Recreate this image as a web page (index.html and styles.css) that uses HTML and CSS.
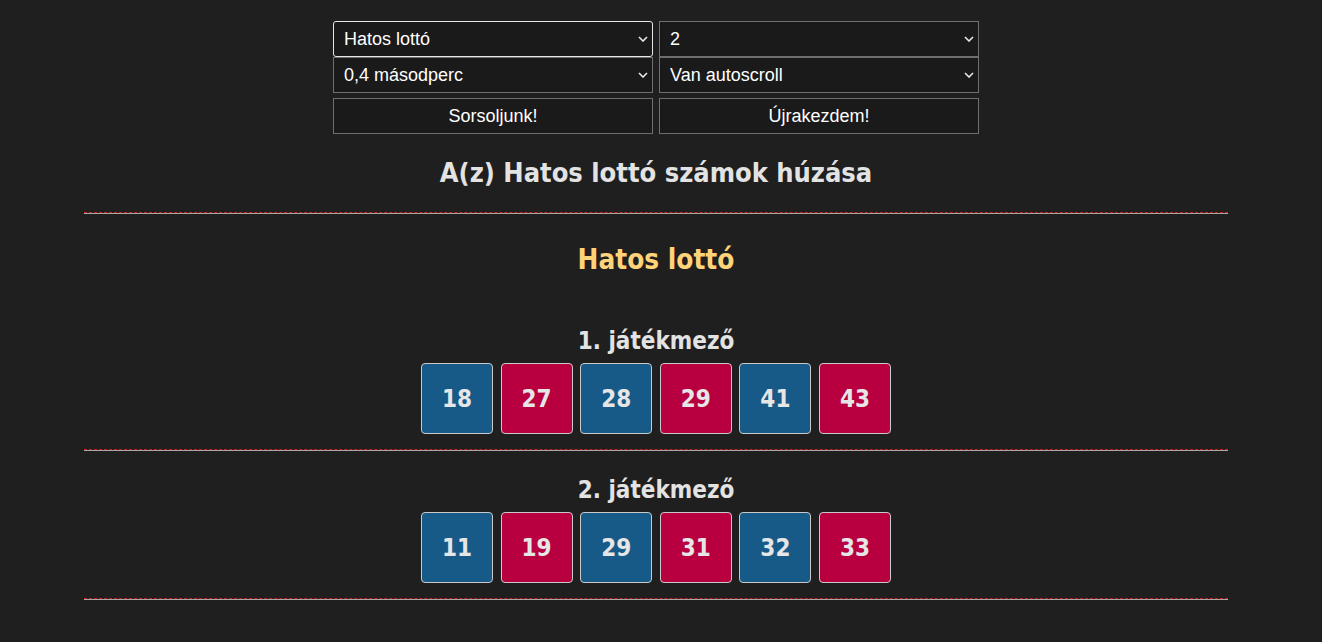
FILE: index.html
```html
<!DOCTYPE html>
<html lang="hu">
<head>
<meta charset="utf-8">
<title>Hatos lottó</title>
<link rel="stylesheet" href="styles.css">
</head>
<body>
<div class="page">
  <div class="controls">
    <div class="col">
      <div class="sel focused"><select><option>Hatos lottó</option></select><svg class="chev" viewBox="0 0 10 6" width="10" height="6"><path d="M1 1l4 4 4-4" fill="none" stroke="#e8e8e8" stroke-width="1.6"/></svg></div>
      <div class="sel"><select><option>0,4 másodperc</option></select><svg class="chev" viewBox="0 0 10 6" width="10" height="6"><path d="M1 1l4 4 4-4" fill="none" stroke="#e8e8e8" stroke-width="1.6"/></svg></div>
      <button class="btn">Sorsoljunk!</button>
    </div>
    <div class="col">
      <div class="sel"><select><option>2</option></select><svg class="chev" viewBox="0 0 10 6" width="10" height="6"><path d="M1 1l4 4 4-4" fill="none" stroke="#e8e8e8" stroke-width="1.6"/></svg></div>
      <div class="sel"><select><option>Van autoscroll</option></select><svg class="chev" viewBox="0 0 10 6" width="10" height="6"><path d="M1 1l4 4 4-4" fill="none" stroke="#e8e8e8" stroke-width="1.6"/></svg></div>
      <button class="btn">Újrakezdem!</button>
    </div>
  </div>
  <h1 class="title">A(z) Hatos lottó számok húzása</h1>
  <div class="rule"></div>
  <h2 class="game">Hatos lottó</h2>
  <section class="field">
    <h3 class="field-title">1. játékmező</h3>
    <div class="balls">
      <div class="ball blue">18</div>
      <div class="ball red">27</div>
      <div class="ball blue">28</div>
      <div class="ball red">29</div>
      <div class="ball blue">41</div>
      <div class="ball red">43</div>
    </div>
  </section>
  <div class="rule"></div>
  <section class="field">
    <h3 class="field-title">2. játékmező</h3>
    <div class="balls">
      <div class="ball blue">11</div>
      <div class="ball red">19</div>
      <div class="ball blue">29</div>
      <div class="ball red">31</div>
      <div class="ball blue">32</div>
      <div class="ball red">33</div>
    </div>
  </section>
  <div class="rule"></div>
</div>
</body>
</html>
```
FILE: styles.css
```css
html, body {
  margin: 0;
  padding: 0;
  background: #1f1f1f;
}
body {
  font-family: "DejaVu Sans Condensed", "DejaVu Sans", sans-serif;
  color: #e3e3e3;
}
.page {
  width: 1312px;
  padding-top: 21px;
  display: flex;
  flex-direction: column;
  align-items: center;
}
.controls {
  display: flex;
  gap: 6px;
}
.col {
  width: 320px;
  display: flex;
  flex-direction: column;
}
.sel {
  position: relative;
  height: 36px;
}
.sel select {
  appearance: none;
  -webkit-appearance: none;
  width: 100%;
  height: 36px;
  box-sizing: border-box;
  margin: 0;
  background: #1a1a1a;
  color: #ffffff;
  border: 1px solid #6f6f6f;
  border-radius: 0;
  font-family: "Liberation Sans", Arial, sans-serif;
  font-size: 18px;
  padding: 0 10px;
  outline: none;
}
.sel.focused select {
  border-color: #e6e6e6;
  border-radius: 3px;
}
.chev {
  position: absolute;
  right: 5px;
  top: 15px;
  pointer-events: none;
}
.btn {
  margin-top: 5px;
  height: 36px;
  box-sizing: border-box;
  background: #1a1a1a;
  color: #ffffff;
  border: 1px solid #6f6f6f;
  border-radius: 0;
  font-family: "Liberation Sans", Arial, sans-serif;
  font-size: 18px;
  padding: 0;
}
.title {
  margin: 19px 0 0;
  font-size: 27px;
  line-height: 40px;
  font-weight: bold;
  color: #e3e3e3;
}
.rule {
  width: 1144px;
  height: 0;
  border-top: 1px dashed #c81e1e;
  border-bottom: 1px solid #a8a8a8;
}
.title + .rule {
  margin-top: 19px;
}
.game {
  margin: 28px 0 0;
  font-size: 27.7px;
  line-height: 36px;
  font-weight: bold;
  color: #ffd479;
}
.field {
  display: flex;
  flex-direction: column;
  align-items: center;
  margin-bottom: 15px;
}
.game + .field {
  margin-top: 48px;
}
.rule + .field {
  margin-top: 24px;
}
.field-title {
  margin: 0;
  font-size: 24px;
  line-height: 30px;
  font-weight: bold;
  color: #e3e3e3;
}
.balls {
  display: flex;
  gap: 7.6px;
  margin-top: 7px;
}
.ball {
  width: 72px;
  height: 71px;
  box-sizing: border-box;
  border: 1px solid #c9c9c9;
  border-radius: 4px;
  display: flex;
  align-items: center;
  justify-content: center;
  font-size: 24px;
  font-weight: bold;
  color: #e6e6e6;
}
.ball.blue {
  background: #175a88;
}
.ball.red {
  background: #b80040;
}
```
